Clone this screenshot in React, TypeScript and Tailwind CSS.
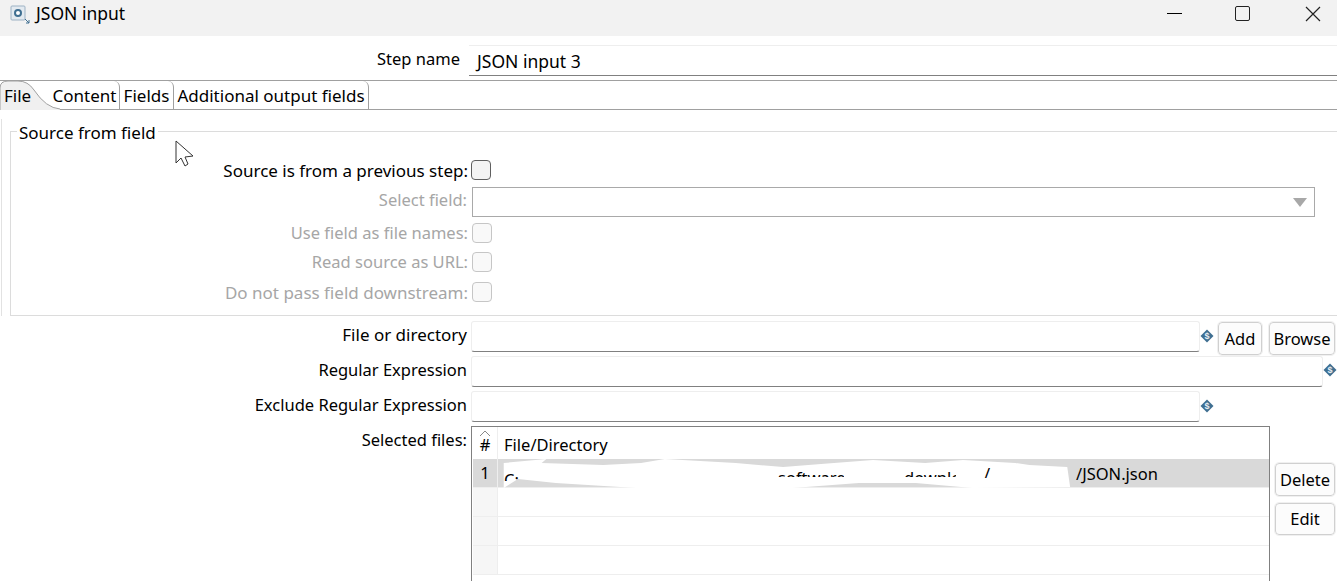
import type { ReactNode } from "react";

const font = "font-['Noto_Sans','Open_Sans',sans-serif]";

function Variable() {
  return (
    <svg width="14" height="14" viewBox="0 0 14 14" className="shrink-0">
      <path d="M7 0.5 L13.5 7 L7 13.5 L0.5 7 Z" fill="#3f6f91" />
      <text x="7" y="10.2" textAnchor="middle" fontSize="9" fontWeight="700" fill="#e8eef3" fontFamily="Liberation Sans, sans-serif">
        $
      </text>
    </svg>
  );
}

function Check({ disabled }: { disabled?: boolean }) {
  return (
    <span
      className={`block size-[20px] shrink-0 rounded-[4px] border ${
        disabled ? "border-[#c6c6c6] bg-[#f9f9f9]" : "border-[#5f5f5f] bg-[#f3f3f3]"
      }`}
    />
  );
}

function CheckRow({ label, disabled, className }: { label: string; disabled?: boolean; className?: string }) {
  return (
    <div className={`flex h-[20px] items-center ${className ?? ""}`}>
      <span className={`w-[457px] whitespace-nowrap text-right leading-none ${disabled ? "text-[#a6a6a6]" : "text-black"}`}>{label}</span>
      <span className={disabled ? "ml-[4px]" : "ml-[3px]"}>
        <Check disabled={disabled} />
      </span>
    </div>
  );
}

function TextInput({ className }: { className: string }) {
  return <div className={`h-[31px] shrink-0 rounded-[3px] border border-[#eeeeee] border-b-[#808080] bg-white ${className}`} />;
}

function Btn({ children, className }: { children: ReactNode; className: string }) {
  return (
    <button type="button" className={`flex shrink-0 items-center justify-center rounded-[4px] border border-[#d0d0d0] bg-[#fcfcfc] pt-px text-[16.5px] text-black outline outline-1 outline-[#f0f0f0] ${className}`}>
      {children}
    </button>
  );
}

function Tab({ children, className }: { children: ReactNode; className: string }) {
  return <div className={`flex h-[29px] items-center justify-center rounded-tr-[6px] border-r border-[#a0a0a0] pt-px ${className}`}>{children}</div>;
}

function GridRow({ num, selected }: { num?: string; selected?: boolean }) {
  return (
    <div className={`flex h-[29px] shrink-0 border-b border-[#eeeeee] ${selected ? "bg-[#d9d9d9]" : ""}`}>
      <div className={`flex w-[25px] items-center justify-center border-r border-[#eeeeee] ${selected ? "" : "bg-[#f6f6f6]"}`}>{num}</div>
    </div>
  );
}

// bits of the path that the hand-painted redaction left visible
function Fragment({ text, className }: { text: string; className: string }) {
  return (
    <span className={`absolute overflow-hidden whitespace-nowrap leading-[20px] ${className}`}>{text}</span>
  );
}

export default function App() {
  return (
    <div className={`h-[581px] w-[1337px] overflow-hidden bg-white text-[16.5px] text-black ${font}`}>
      {/* title bar */}
      <div className="flex h-[36px] items-center bg-[#f2f2f2] pb-[9px]">
        <svg width="20" height="20" viewBox="0 0 20 20" className="ml-[10px]">
          <rect x="1" y="2" width="14" height="14" rx="1" fill="#e3eaf0" stroke="#9db2c4" />
          <circle cx="8" cy="9" r="3" fill="#fff" stroke="#3f6f91" strokeWidth="2" />
          <path d="M15 15 L19 19 M19 16 V19 H16" stroke="#3f6f91" strokeWidth="1" fill="none" />
        </svg>
        <span className="ml-[6px] text-[17.5px]">JSON input</span>
        <div className="ml-auto flex items-center">
          <span className="h-px w-[15px] bg-black" />
          <span className="ml-[53px] size-[15px] rounded-[2px] border-[1.5px] border-[#222]" />
          <svg width="16" height="16" viewBox="0 0 16 16" className="ml-[55px] mr-[16px]">
            <path d="M1 1 L15 15 M15 1 L1 15" stroke="#222" strokeWidth="1.2" />
          </svg>
        </div>
      </div>

      {/* step name */}
      <div className="mt-[9px] flex h-[31px] items-center">
        <span className="w-[460px] pb-[2px] text-right leading-none">Step name</span>
        <div className="ml-[9px] flex h-full flex-1 items-center border-t border-b border-[#eeeeee] border-b-[#808080] pl-[8px] pt-[2px] text-[17.5px]">JSON input 3</div>
      </div>

      {/* tabs */}
      <div className="relative mt-[4px] flex h-[30px] border-t border-b border-t-[#a0a0a0] border-b-[#a0a0a0] text-[17px]">
        <div className="relative flex w-[48px] items-center pl-[4px] pt-px">
          <svg width="62" height="30" viewBox="0 0 62 30" className="absolute -top-px left-0">
            <path d="M0 30 V8 Q0 1 8 1 H18 Q28 1 34 10 Q46 28 60 29 V30 Z" fill="#f0f0f0" />
            <path d="M0 30 V8 Q0 1 8 1 H18 Q28 1 34 10 Q46 28 60 29" fill="none" stroke="#a0a0a0" />
          </svg>
          <span className="relative">File</span>
        </div>
        <Tab className="w-[72px] pl-[2px]">Content</Tab>
        <Tab className="w-[54px]">Fields</Tab>
        <Tab className="w-[195px] whitespace-nowrap">Additional output fields</Tab>
      </div>

      {/* file tab body */}
      <div className="ml-px border-l border-[#e2e2e2] pl-[8px]">
        <fieldset className="mt-[9px] h-[197px] border border-r-0 border-[#dcdcdc] text-[17px]">
          <legend className="ml-[6px] h-[24px] px-[2px] pt-[4px] leading-[20px]">Source from field</legend>
          <div className="w-[1304px] pt-[17px]">
            <CheckRow label="Source is from a previous step:" />
            <div className="mt-[7px] flex h-[30px] items-center">
              <span className="w-[456px] pb-[3px] text-right text-[16.5px] leading-none text-[#a6a6a6]">Select field:</span>
              <div className="ml-[5px] flex h-full flex-1 items-center justify-end border border-[#a9a9a9] pr-[7px]">
                <svg width="14" height="10" viewBox="0 0 14 10">
                  <path d="M0 1 H14 L7 10 Z" fill="#a8a8a8" />
                </svg>
              </div>
            </div>
            <CheckRow disabled label="Use field as file names:" className="mt-[6px] text-[16.5px]" />
            <CheckRow disabled label="Read source as URL:" className="mt-[9px] text-[16.5px]" />
            <CheckRow disabled label="Do not pass field downstream:" className="mt-[10px]" />
          </div>
        </fieldset>
      </div>

      <div className="relative">
        {/* mouse cursor */}
        <svg width="20" height="28" viewBox="0 0 20 28" className="absolute -top-[176px] left-[175px]">
          <path d="M1 1 V23 L6 18 L10 26 L13 24 L10 17 L18 16 Z" fill="#fff" stroke="#333" strokeWidth="1" />
        </svg>

        <div className="flex h-[40px] pt-[5px]">
          <span className="w-[467px] pt-[4px] text-right text-[17px] leading-[20px]">File or directory</span>
          <TextInput className="ml-[4px] w-[729px]" />
          <span className="mt-[8px] flex w-[18px] justify-start"><Variable /></span>
          <Btn className="mt-px h-[33px] w-[44px]">Add</Btn>
          <Btn className="ml-[7px] mt-px h-[33px] w-[66px]">Browse</Btn>
        </div>
        <div className="flex h-[35px]">
          <span className="w-[467px] pt-[4px] text-right leading-[20px]">Regular Expression</span>
          <TextInput className="ml-[4px] w-[852px]" />
          <span className="mt-[7px]"><Variable /></span>
        </div>
        <div className="flex h-[35px]">
          <span className="w-[467px] pt-[4px] text-right leading-[20px]">Exclude Regular Expression</span>
          <TextInput className="ml-[4px] w-[729px]" />
          <span className="mt-[8px]"><Variable /></span>
        </div>

        <div className="flex">
          <span className="w-[467px] pt-[4px] text-right leading-[20px]">Selected files:</span>
          <div className="relative ml-[4px] flex h-[170px] w-[799px] shrink-0 flex-col border border-[#808080] pl-px">
            <div className="flex h-[32px] shrink-0">
              <div className="relative flex w-[25px] items-end justify-center border-r border-[#eeeeee] pb-[4px] leading-[20px]">
                <svg width="12" height="7" viewBox="0 0 12 7" className="absolute left-[6px] top-[3px]">
                  <path d="M1 6 L6 1 L11 6" fill="none" stroke="#888" />
                </svg>
                #
              </div>
              <div className="pl-[6px] pt-[8px] leading-[20px]">File/Directory</div>
            </div>
            <GridRow num="1" selected />
            <GridRow />
            <GridRow />
            <GridRow />
            {/* hand-painted redaction over the path */}
            <span className="absolute left-[604px] top-[37px] leading-[20px]">/JSON.json</span>
            <svg width="573" height="29" viewBox="0 0 605 29" preserveAspectRatio="none" className="absolute left-[27px] top-[32px]">
              <path d="M5 4 L50 0 L45 4 L110 6 L150 4 L175 0 L250 4 L300 8 L340 5 L395 1 L450 4 L490 1 L545 4 L560 6 L600 8 L603 28 L500 29 L440 24 L380 24 L310 29 L145 29 L60 24 L20 20 L5 29 Z" fill="#fff" />
            </svg>
            <Fragment text="C:/" className="left-[32px] top-[43px] h-[11px] w-[16px]" />
            <Fragment text="software" className="left-[306px] top-[41px] h-[9px] w-[66px]" />
            <Fragment text="downlo" className="left-[432px] top-[41px] h-[9px] w-[52px]" />
            <Fragment text="/" className="left-[512px] top-[37px] h-[14px] w-[8px]" />
          </div>
          <div className="ml-[5px] flex flex-col pt-[37px]">
            <Btn className="h-[33px] w-[60px]">Delete</Btn>
            <Btn className="mt-[7px] h-[32px] w-[60px]">Edit</Btn>
          </div>
        </div>
      </div>
    </div>
  );
}
